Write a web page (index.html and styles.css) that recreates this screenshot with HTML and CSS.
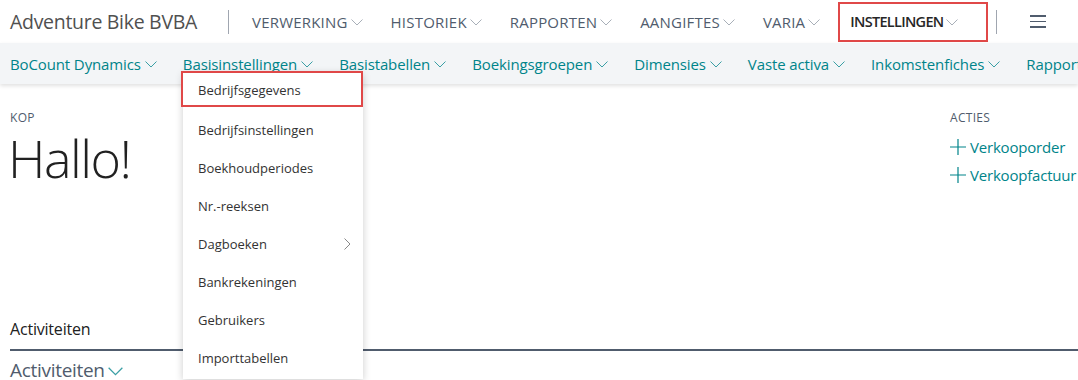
FILE: index.html
```html
<!DOCTYPE html>
<html lang="nl">
<head>
  <meta charset="UTF-8">
  <title>Adventure Bike BVBA</title>
  <link rel="stylesheet" href="styles.css">
</head>
<body>

  <header class="topbar">
    <div class="company">Adventure Bike BVBA</div>
    <span class="divider"></span>
    <nav class="mainnav">
      <a class="navitem">VERWERKING<svg class="chev" viewBox="0 0 12 7"><path d="M0.5 0.5l5.5 5.5 5.5-5.5"/></svg></a>
      <a class="navitem">HISTORIEK<svg class="chev" viewBox="0 0 12 7"><path d="M0.5 0.5l5.5 5.5 5.5-5.5"/></svg></a>
      <a class="navitem">RAPPORTEN<svg class="chev" viewBox="0 0 12 7"><path d="M0.5 0.5l5.5 5.5 5.5-5.5"/></svg></a>
      <a class="navitem">AANGIFTES<svg class="chev" viewBox="0 0 12 7"><path d="M0.5 0.5l5.5 5.5 5.5-5.5"/></svg></a>
      <a class="navitem">VARIA<svg class="chev" viewBox="0 0 12 7"><path d="M0.5 0.5l5.5 5.5 5.5-5.5"/></svg></a>
      <a class="navitem active">INSTELLINGEN<svg class="chev" viewBox="0 0 12 7"><path d="M0.5 0.5l5.5 5.5 5.5-5.5"/></svg></a>
    </nav>
    <span class="divider end"></span>
    <span class="hamburger"><i></i><i></i><i></i></span>
  </header>

  <nav class="subnav">
    <a class="subitem">BoCount Dynamics<svg class="chev" viewBox="0 0 12 7"><path d="M0.5 0.5l5.5 5.5 5.5-5.5"/></svg></a>
    <a class="subitem">Basisinstellingen<svg class="chev" viewBox="0 0 12 7"><path d="M0.5 0.5l5.5 5.5 5.5-5.5"/></svg></a>
    <a class="subitem">Basistabellen<svg class="chev" viewBox="0 0 12 7"><path d="M0.5 0.5l5.5 5.5 5.5-5.5"/></svg></a>
    <a class="subitem">Boekingsgroepen<svg class="chev" viewBox="0 0 12 7"><path d="M0.5 0.5l5.5 5.5 5.5-5.5"/></svg></a>
    <a class="subitem">Dimensies<svg class="chev" viewBox="0 0 12 7"><path d="M0.5 0.5l5.5 5.5 5.5-5.5"/></svg></a>
    <a class="subitem">Vaste activa<svg class="chev" viewBox="0 0 12 7"><path d="M0.5 0.5l5.5 5.5 5.5-5.5"/></svg></a>
    <a class="subitem">Inkomstenfiches<svg class="chev" viewBox="0 0 12 7"><path d="M0.5 0.5l5.5 5.5 5.5-5.5"/></svg></a>
    <a class="subitem">Rapporten<svg class="chev" viewBox="0 0 12 7"><path d="M0.5 0.5l5.5 5.5 5.5-5.5"/></svg></a>
  </nav>

  <ul class="dropdown">
    <li class="selected">Bedrijfsgegevens</li>
    <li>Bedrijfsinstellingen</li>
    <li>Boekhoudperiodes</li>
    <li>Nr.-reeksen</li>
    <li class="has-sub">Dagboeken<svg class="arrow" viewBox="0 0 7 12"><path d="M0.5 0.5l5.5 5.5-5.5 5.5"/></svg></li>
    <li>Bankrekeningen</li>
    <li>Gebruikers</li>
    <li>Importtabellen</li>
  </ul>

  <main class="content">
    <section class="head">
      <div class="kop">
        <div class="caption">KOP</div>
        <h1 class="greeting">Hallo!</h1>
      </div>
      <div class="acties">
        <div class="caption">ACTIES</div>
        <a class="action"><svg class="plus" viewBox="0 0 16 16"><path d="M8 0v16M0 8h16"/></svg>Verkooporder</a>
        <a class="action"><svg class="plus" viewBox="0 0 16 16"><path d="M8 0v16M0 8h16"/></svg>Verkoopfactuur</a>
      </div>
    </section>

    <section class="activities">
      <div class="tab">Activiteiten</div>
      <h2 class="group">Activiteiten<svg class="chev big" viewBox="0 0 12 7"><path d="M0.5 0.5l5.5 5.5 5.5-5.5"/></svg></h2>
    </section>
  </main>

</body>
</html>
```

FILE: styles.css
```css
body {
  margin: 0;
  font-family: "Open Sans", "Noto Sans", sans-serif;
  background-color: #fff;
  color: #333;
  overflow: hidden;
  width: 1078px;
  height: 380px;
  position: relative;
}

a {
  cursor: pointer;
}

svg path {
  fill: none;
  stroke-width: 1;
}

.topbar {
  display: flex;
  align-items: center;
  height: 43px;
  padding-left: 10px;
  white-space: nowrap;
}

.company {
  font-size: 19.5px;
  color: #505050;
  letter-spacing: -0.3px;
}

.divider {
  width: 1px;
  height: 24px;
  background: #a0a6b0;
  margin: 0 23px 0 31px;
}

.divider.end {
  margin: 0 0 0 10px;
}

.mainnav {
  display: flex;
  gap: 28px;
}

.navitem {
  display: flex;
  align-items: center;
  font-size: 15px;
  color: #505c6d;
  letter-spacing: 0.2px;
}

.navitem.active {
  font-size: 14.5px;
  font-weight: 600;
  color: #262626;
  outline: 2px solid #e04848;
  height: 36px;
  box-sizing: border-box;
  padding: 0 28px 0 10px;
  margin-left: -8px;
  letter-spacing: -0.7px;
}

.chev {
  width: 12px;
  height: 7px;
  margin: 1px 0 0 3px;
}

.chev path {
  stroke: #a8afb8;
}

.hamburger {
  display: flex;
  flex-direction: column;
  gap: 4px;
  margin-left: 33px;
}

.hamburger i {
  display: block;
  width: 16px;
  height: 1.5px;
  background: #505c6d;
}

.subnav {
  display: flex;
  gap: 26px;
  height: 41px;
  align-items: center;
  padding-left: 10px;
  background: #f3f5f7;
  box-shadow: 0 2px 4px rgba(0, 0, 0, 0.12);
  white-space: nowrap;
  overflow: hidden;
  position: relative;
}

.subitem {
  display: flex;
  align-items: center;
  font-size: 15px;
  color: #00848a;
  letter-spacing: -0.12px;
}

.subitem .chev {
  margin-left: 4px;
}

.subitem .chev path {
  stroke: #3a9fa5;
}

.dropdown {
  position: absolute;
  left: 183px;
  top: 72px;
  width: 180px;
  margin: 0;
  padding: 0 0 2px;
  list-style: none;
  background: #fff;
  box-shadow: 0 2px 8px rgba(0, 0, 0, 0.2);
  z-index: 10;
}

.dropdown li {
  display: flex;
  align-items: center;
  height: 38px;
  padding-left: 15px;
  font-size: 13px;
  color: #333;
}

.dropdown li.selected {
  height: 31px;
  margin: 1px 2px 6px 0;
  outline: 2px solid #e04848;
  padding-top: 1px;
}

.dropdown .arrow {
  width: 7px;
  height: 12px;
  margin-left: auto;
  margin-right: 12px;
}

.dropdown .arrow path {
  stroke: #888;
}

.content {
  padding: 0 0 0 10px;
}

.head {
  display: flex;
  justify-content: space-between;
  padding-top: 26px;
  height: 208px;
}

.caption {
  font-size: 12px;
  color: #505c6d;
  letter-spacing: 0.3px;
  line-height: 16px;
}

.greeting {
  margin: 10px 0 0 -2px;
  font-size: 52px;
  font-weight: 300;
  color: #212121;
  letter-spacing: -1.5px;
  line-height: 44px;
}

.acties {
  width: 128px;
  white-space: nowrap;
}

.action {
  display: flex;
  align-items: center;
  font-size: 15px;
  color: #00848a;
  height: 28px;
  letter-spacing: -0.2px;
}

.acties .caption {
  margin-bottom: 7px;
}

.plus {
  width: 16px;
  height: 16px;
  margin-right: 4px;
}

.plus path {
  stroke: #00848a;
  stroke-width: 1.2;
}

.tab {
  font-size: 16px;
  color: #212121;
  padding-bottom: 9px;
  border-bottom: 2px solid #505c6d;
  letter-spacing: -0.2px;
}

.group {
  margin: 6px 0 0;
  font-size: 19px;
  font-weight: 400;
  color: #505c6d;
  display: flex;
  align-items: center;
  letter-spacing: -0.3px;
}

.chev.big {
  width: 15px;
  height: 9px;
  margin: 2px 0 0 3px;
}

.chev.big path {
  stroke: #3a9fa5;
}
```
